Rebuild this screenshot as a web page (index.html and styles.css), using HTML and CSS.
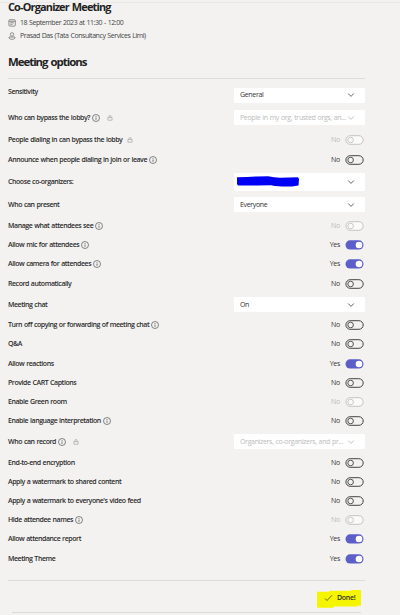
FILE: index.html
```html
<!DOCTYPE html>
<html lang="en">
<head>
<meta charset="utf-8">
<title>Meeting options</title>
<link rel="stylesheet" href="styles.css">
</head>
<body>
<svg class="defs" width="0" height="0">
  <symbol id="info" viewBox="0 0 8 8"><circle cx="4" cy="4" r="3.5" fill="none" stroke="#555" stroke-width=".7"/><path d="M4 3.5v2.3M4 2v.8" stroke="#555" stroke-width=".8"/></symbol>
  <symbol id="lock" viewBox="0 0 6 6"><path d="M.9 2.5h4.2v2.7H.9zM1.9 2.4V1.6a1.1 1.1 0 0 1 2.2 0v.8" fill="none" stroke="#999" stroke-width=".6"/></symbol>
  <symbol id="chevron" viewBox="0 0 8 6"><path d="M1.2 1.5 4 4.4 6.8 1.5" fill="none" stroke="currentColor" stroke-width=".9"/></symbol>
  <symbol id="no" viewBox="0 0 19 10"><rect x=".9" y=".7" width="17.3" height="8.6" rx="4.3" stroke="currentColor" fill="var(--track, none)"/><circle cx="5.6" cy="5" r="2.8" fill="none" stroke="currentColor" stroke-width=".9"/></symbol>
  <symbol id="yes" viewBox="0 0 19 10"><rect x=".5" y=".3" width="18" height="9.3" rx="4.6" fill="#5b5fc7"/><circle cx="14" cy="5" r="3.3" fill="#fff"/></symbol>
</svg>
<main class="page">
  <header>
    <h1>Co-Organizer Meeting</h1>
    <p class="meta"><svg viewBox="0 0 8 8"><rect x=".9" y=".7" width="6.4" height="6.4" rx="1" /><path d="M1 2.3h6.3M2.3 3.8h3.6M2.3 5.3h2.2"/></svg><span class="date">18 September 2023 at 11:30 - 12:00</span></p>
    <p class="meta"><svg viewBox="0 0 8 8"><circle cx="4" cy="2.4" r="1.7"/><path d="M1 5h6v.7c0 2.1-6 2.1-6 0z"/></svg><span class="host">Prasad Das (Tata Consultancy Services Limi)</span></p>
    <h2>Meeting options</h2>
  </header>
  <section class="options">
    <div class="row raised"><span class="label">Sensitivity</span><div class="select">General<svg><use href="#chevron"/></svg></div></div>
    <div class="row"><span class="label">Who can bypass the lobby?</span><svg class="info"><use href="#info"/></svg><svg class="lock"><use href="#lock"/></svg><div class="select off"><span class="long">People in my org, trusted orgs, an...</span><svg><use href="#chevron"/></svg></div></div>
    <div class="row"><span class="label">People dialing in can bypass the lobby</span><svg class="lock near"><use href="#lock"/></svg><span class="state off">No</span><svg class="toggle off"><use href="#no"/></svg></div>
    <div class="row"><span class="label">Announce when people dialing in join or leave</span><svg class="info"><use href="#info"/></svg><span class="state">No</span><svg class="toggle"><use href="#no"/></svg></div>
    <div class="row"><span class="label">Choose co-organizers:</span><div class="select tall"><svg class="scribble" viewBox="0 0 62 12"><path d="M0 1.3 10 1 20 .4 31 .2 37 1.2 43 1.8 61 1.2 62 3 61.5 9.5 55 10.4 45 10.6 38 10 34 9.2 20 9.4H1L0 8z"/></svg><svg><use href="#chevron"/></svg></div></div>
    <div class="row"><span class="label">Who can present</span><div class="select">Everyone<svg><use href="#chevron"/></svg></div></div>
    <div class="row"><span class="label">Manage what attendees see</span><svg class="info"><use href="#info"/></svg><span class="state off">No</span><svg class="toggle off"><use href="#no"/></svg></div>
    <div class="row"><span class="label">Allow mic for attendees</span><svg class="info"><use href="#info"/></svg><span class="state">Yes</span><svg class="toggle"><use href="#yes"/></svg></div>
    <div class="row"><span class="label">Allow camera for attendees</span><svg class="info"><use href="#info"/></svg><span class="state">Yes</span><svg class="toggle"><use href="#yes"/></svg></div>
    <div class="row"><span class="label">Record automatically</span><span class="state">No</span><svg class="toggle"><use href="#no"/></svg></div>
    <div class="row"><span class="label">Meeting chat</span><div class="select">On<svg><use href="#chevron"/></svg></div></div>
    <div class="row"><span class="label">Turn off copying or forwarding of meeting chat</span><svg class="info"><use href="#info"/></svg><span class="state">No</span><svg class="toggle"><use href="#no"/></svg></div>
    <div class="row"><span class="label">Q&amp;A</span><span class="state">No</span><svg class="toggle"><use href="#no"/></svg></div>
    <div class="row"><span class="label">Allow reactions</span><span class="state">Yes</span><svg class="toggle"><use href="#yes"/></svg></div>
    <div class="row"><span class="label">Provide CART Captions</span><span class="state">No</span><svg class="toggle"><use href="#no"/></svg></div>
    <div class="row"><span class="label">Enable Green room</span><span class="state off">No</span><svg class="toggle off"><use href="#no"/></svg></div>
    <div class="row"><span class="label">Enable language interpretation</span><svg class="info"><use href="#info"/></svg><span class="state">No</span><svg class="toggle"><use href="#no"/></svg></div>
    <div class="row"><span class="label">Who can record</span><svg class="info"><use href="#info"/></svg><svg class="lock"><use href="#lock"/></svg><div class="select off"><span class="long">Organizers, co-organizers, and pr...</span><svg><use href="#chevron"/></svg></div></div>
    <div class="row"><span class="label">End-to-end encryption</span><span class="state">No</span><svg class="toggle"><use href="#no"/></svg></div>
    <div class="row"><span class="label">Apply a watermark to shared content</span><span class="state">No</span><svg class="toggle"><use href="#no"/></svg></div>
    <div class="row"><span class="label">Apply a watermark to everyone's video feed</span><span class="state">No</span><svg class="toggle"><use href="#no"/></svg></div>
    <div class="row"><span class="label">Hide attendee names</span><svg class="info"><use href="#info"/></svg><span class="state off">No</span><svg class="toggle off"><use href="#no"/></svg></div>
    <div class="row"><span class="label">Allow attendance report</span><span class="state">Yes</span><svg class="toggle"><use href="#yes"/></svg></div>
    <div class="row"><span class="label">Meeting Theme</span><span class="state">Yes</span><svg class="toggle"><use href="#yes"/></svg></div>
  </section>
  <footer>
    <div class="done"><svg viewBox="0 0 9 8"><path d="M1 4.5 3 6.5 8 1.3" fill="none" stroke="#4a4a10" stroke-width=".8"/></svg>Done!</div>
  </footer>
</main>
</body>
</html>
```
FILE: styles.css
```css
* { box-sizing: border-box; }
body {
  margin: 0;
  height: 615px;
  overflow: hidden;
  background: #f3f2f1;
  color: #333;
  font: 7px/10px "Open Sans", "Noto Sans", sans-serif;
  letter-spacing: -.44px;
  word-spacing: .5px;
}
.defs { position: absolute; }
svg { flex: none; }
.page {
  width: 400px;
  height: 615px;
  background: linear-gradient(#e9e8e7, #e9e8e7) 0 2px / 100% 1px no-repeat;
}
header {
  height: 78px;
  margin-right: 35px;
  padding-left: 8px;
}
h1, h2, p { margin: 0; }
h1, h2 {
  color: #222;
  font-weight: 700;
  white-space: nowrap;
}
h1 { font-size: 10.9px; line-height: 14px; padding-bottom: 2px; letter-spacing: -.82px; word-spacing: 1px; }
h2 { font-size: 11.4px; line-height: 16px; padding-top: 12px; letter-spacing: -1px; word-spacing: 1px; }
.meta {
  display: flex;
  align-items: center;
  height: 13px;
  white-space: nowrap;
  color: #444;
}
.meta svg {
  width: 8px;
  height: 8px;
  margin-right: 4px;
  fill: none;
  stroke: #666;
  stroke-width: .7;
}
.options {
  display: grid;
  grid-template-rows: 22.5px 21.7px 20.8px 22px 22.5px 20.9px 19.7px 18.9px 20px 20.2px 20.8px 19px 19.5px 18.8px 19.7px 18.7px 20.6px 21px 19.7px 18.7px 19.5px 18.9px 19.9px 28.6px;
  margin: 0 35px 0 8px;
  padding-top: 8.4px;
  border-top: 1px solid #dddcdb;
}
.row {
  display: flex;
  align-items: center;
  height: 16px;
}
.label {
  color: #2c2c2c;
  font-weight: 600;
  white-space: nowrap;
}
.raised .label { transform: translateY(-3px); }
.info { width: 8px; height: 8px; margin-left: 2px; }
.lock { width: 6px; height: 6px; margin-left: 7px; }
.lock.near { margin-left: 5px; }
.select {
  display: flex;
  align-items: center;
  justify-content: space-between;
  width: 131px;
  height: 15px;
  margin-left: auto;
  padding: 0 10px 0 6px;
  border-radius: 1px;
  background: #fff;
  white-space: nowrap;
  letter-spacing: -.34px;
}
.select svg { width: 8px; height: 6px; color: #555; }
.select.off, .state.off { color: #bbb; }
.select.off svg { color: #bbb; }
.select.tall { height: 18px; padding-left: 3px; }
.select .scribble { width: 62px; height: 12px; fill: #0000f5; }
.state {
  margin-left: auto;
  margin-right: 5px;
  letter-spacing: -.3px;
}
.toggle {
  width: 19px;
  height: 10px;
  margin-right: 1px;
  color: #444;
}
.toggle.off { --track: #fafafa; color: #c4c3c2; }
footer {
  width: 357px;
  height: 33px;
  margin-left: 8px;
  padding: 9px 4px 0 0;
  border-top: 1px solid #dddcdb;
  background: linear-gradient(#dddcdb, #dddcdb) 4px 31px / 349px 1px no-repeat;
}
.done {
  display: flex;
  align-items: center;
  gap: 4px;
  width: 44px;
  height: 18px;
  margin-left: auto;
  padding: 0 0 2px 7px;
  background: #f5f500;
  clip-path: polygon(0 10%, 28% 10%, 28% 5%, 78% 5%, 78% 0, 100% 0, 100% 88%, 92% 88%, 92% 92%, 38% 92%, 38% 100%, 0 100%);
  color: #333;
  font-weight: 600;
  letter-spacing: -.3px;
}
.done svg { width: 9px; height: 8px; }
```
